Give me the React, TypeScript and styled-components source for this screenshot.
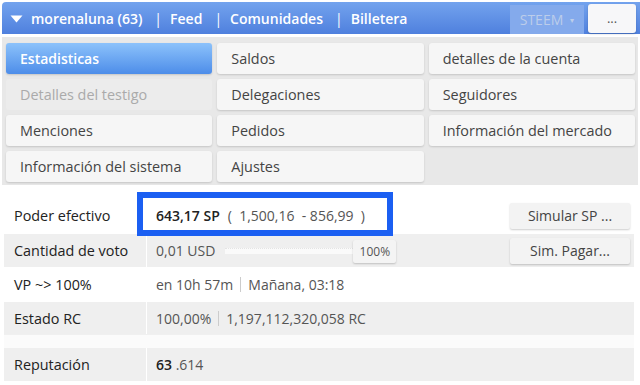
import styled, { createGlobalStyle } from 'styled-components';

const GlobalStyle = createGlobalStyle`
    body {
        margin: 0;
        background: #fff;
        font-family: "Open Sans", "Noto Sans", sans-serif;
        color: #333;
    }
`

const menuItems = [
    { label: 'Estadisticas', active: true },
    { label: 'Saldos' },
    { label: 'detalles de la cuenta' },
    { label: 'Detalles del testigo', disabled: true },
    { label: 'Delegaciones' },
    { label: 'Seguidores' },
    { label: 'Menciones' },
    { label: 'Pedidos' },
    { label: 'Información del mercado' },
    { label: 'Información del sistema' },
    { label: 'Ajustes' },
]

export default function App() {
    return (
        <>
            <GlobalStyle />
            <Page>
                <TopBar>
                    <NavLinks>
                        <svg width="13" height="8" viewBox="0 0 13 8">
                            <path d="M0.5 0.5 L12.5 0.5 L6.5 7.5 Z" fill="#fff" />
                        </svg>
                        <span>morenaluna (63)</span>
                        <Sep>|</Sep>
                        <span>Feed</span>
                        <Sep>|</Sep>
                        <span>Comunidades</span>
                        <Sep>|</Sep>
                        <span>Billetera</span>
                    </NavLinks>
                    <CoinSelect>STEEM <small>▾</small></CoinSelect>
                    <MoreBtn>...</MoreBtn>
                </TopBar>

                <MenuPanel>
                    {menuItems.map((item) => (
                        <MenuBtn key={item.label} $active={item.active} $disabled={item.disabled}>
                            {item.label}
                        </MenuBtn>
                    ))}
                </MenuPanel>

                <Table>
                    <Row $h={37}>
                        <Label>Poder efectivo</Label>
                        <Value>
                            <Highlight />
                            <strong>643,17 SP</strong>
                            <Paren>( &nbsp;1,500,16 &nbsp;- 856,99 &nbsp;)</Paren>
                        </Value>
                        <Action><SideBtn>Simular SP ...</SideBtn></Action>
                    </Row>
                    <Row $grey $h={33}>
                        <Label>Cantidad de voto</Label>
                        <Value>
                            0,01 USD
                            <VoteBar>
                                <Badge>100%</Badge>
                            </VoteBar>
                        </Value>
                        <Action><SideBtn>Sim. Pagar...</SideBtn></Action>
                    </Row>
                    <Row $h={35}>
                        <Label>VP ~&gt; 100%</Label>
                        <Value>en 10h 57m<Pipe />Mañana, 03:18</Value>
                        <Action />
                    </Row>
                    <Row $grey $h={32}>
                        <Label>Estado RC</Label>
                        <Value>100,00%<Pipe />1,197,112,320,058 RC</Value>
                        <Action />
                    </Row>
                    <Spacer />
                    <Row $grey $h={33}>
                        <Label>Reputación</Label>
                        <Value><strong>63</strong>&nbsp;.614</Value>
                        <Action />
                    </Row>
                </Table>
            </Page>
        </>
    );
}

const Page = styled.div`
    width: 640px;
    height: 385px;
    overflow: hidden;
    padding-top: 2px;
    box-sizing: border-box;
`

const TopBar = styled.div`
    margin-left: 2px;
    height: 32px;
    display: flex;
    align-items: center;
    padding: 0 4px 0 8px;
    border-radius: 4px 0 0 0;
    background: linear-gradient(#73a3ee, #4f80de);
`

const NavLinks = styled.div`
    flex: 1;
    display: flex;
    align-items: center;
    color: #fff;
    font-size: 14px;
    font-weight: 600;
    svg { margin-right: 8px; margin-top: 1px; }
`

const Sep = styled.span`
    margin: 0 8px 0 12px;
    font-weight: 400;
`

const CoinSelect = styled.div`
    width: 74px;
    height: 29px;
    box-sizing: border-box;
    display: flex;
    align-items: center;
    justify-content: center;
    gap: 7px;
    background: #84aaec;
    color: #bccdea;
    font-size: 14px;
    margin-right: 4px;
    margin-top: 2px;
    small { font-size: 8px; }
`

const MoreBtn = styled.div`
    width: 48px;
    height: 29px;
    display: flex;
    align-items: center;
    justify-content: center;
    background: #f7f7f9;
    border-radius: 3px;
    color: #555;
    font-size: 13px;
    box-shadow: 0 1px 2px rgba(0,0,0,0.2);
`

const MenuPanel = styled.div`
    margin: 3px 2px 0 2px;
    background: #e8e8e8;
    padding: 6px 3px 3px 4px;
    display: grid;
    grid-template-columns: repeat(3, 1fr);
    gap: 5px 5px;
`

const MenuBtn = styled.div<{ $active?: boolean; $disabled?: boolean }>`
    height: 31px;
    display: flex;
    align-items: center;
    padding-left: 14px;
    border-radius: 3px;
    font-size: ${(p) => p.$active ? '14px' : '14.4px'};
    background: ${(p) => p.$active ? 'linear-gradient(#8cc2fb, #4d8de9)' : p.$disabled ? '#ececec' : '#f6f6f6'};
    color: ${(p) => p.$active ? '#fff' : p.$disabled ? '#aaa' : '#444'};
    font-weight: ${(p) => p.$active ? 600 : 400};
    box-shadow: ${(p) => p.$disabled ? 'none' : '0 1px 2px rgba(0,0,0,0.15)'};
`

const Table = styled.div`
    margin: 12px 6px 0 4px;
    display: flex;
    flex-direction: column;
`

const Row = styled.div<{ $grey?: boolean; $h: number }>`
    height: ${(p) => p.$h}px;
    display: grid;
    grid-template-columns: 143px 1fr 126px;
    background: ${(p) => p.$grey ? '#efefef' : '#fff'};
`

const Spacer = styled.div`
    height: 14px;
    background: #fbfbfb;
    border-top: 1px solid #f0f0f0;
    box-sizing: border-box;
`

const Label = styled.div`
    display: flex;
    align-items: center;
    padding-left: 10px;
    font-size: 14.4px;
    font-weight: 500;
    color: #222;
    border-right: 1px solid #fff;
`

const Value = styled.div`
    position: relative;
    display: flex;
    align-items: center;
    padding-left: 9px;
    font-size: 14px;
    color: #555;
    strong { color: #222; font-weight: 600; }
`

const Highlight = styled.div`
    position: absolute;
    left: -10px;
    top: -5px;
    width: 256px;
    height: 44px;
    box-sizing: border-box;
    border: 6px solid #1b5ff2;
    pointer-events: none;
`

const Paren = styled.span`
    margin-left: 8px;
`

const Pipe = styled.span`
    display: inline-block;
    width: 1px;
    height: 15px;
    background: #ccc;
    margin: 0 7px;
`

const VoteBar = styled.div`
    position: relative;
    margin-left: 10px;
    width: 130px;
    height: 5px;
    background: #fafafa;
    border-top: 1px dotted #e4e4e4;
`

const Badge = styled.div`
    position: absolute;
    left: 128px;
    top: -9px;
    width: 43px;
    height: 23px;
    display: flex;
    align-items: center;
    justify-content: center;
    background: #f4f4f4;
    font-size: 12px;
    color: #555;
    box-shadow: 0 1px 2px rgba(0,0,0,0.2);
    border-radius: 2px;
`

const Action = styled.div`
    display: flex;
    align-items: center;
    justify-content: flex-end;
    padding-right: 4px;
`

const SideBtn = styled.div`
    width: 120px;
    height: 26px;
    display: flex;
    align-items: center;
    justify-content: center;
    background: #f3f3f3;
    border-radius: 2px;
    font-size: 14px;
    color: #444;
    box-shadow: 0 1px 2px rgba(0,0,0,0.2);
`
